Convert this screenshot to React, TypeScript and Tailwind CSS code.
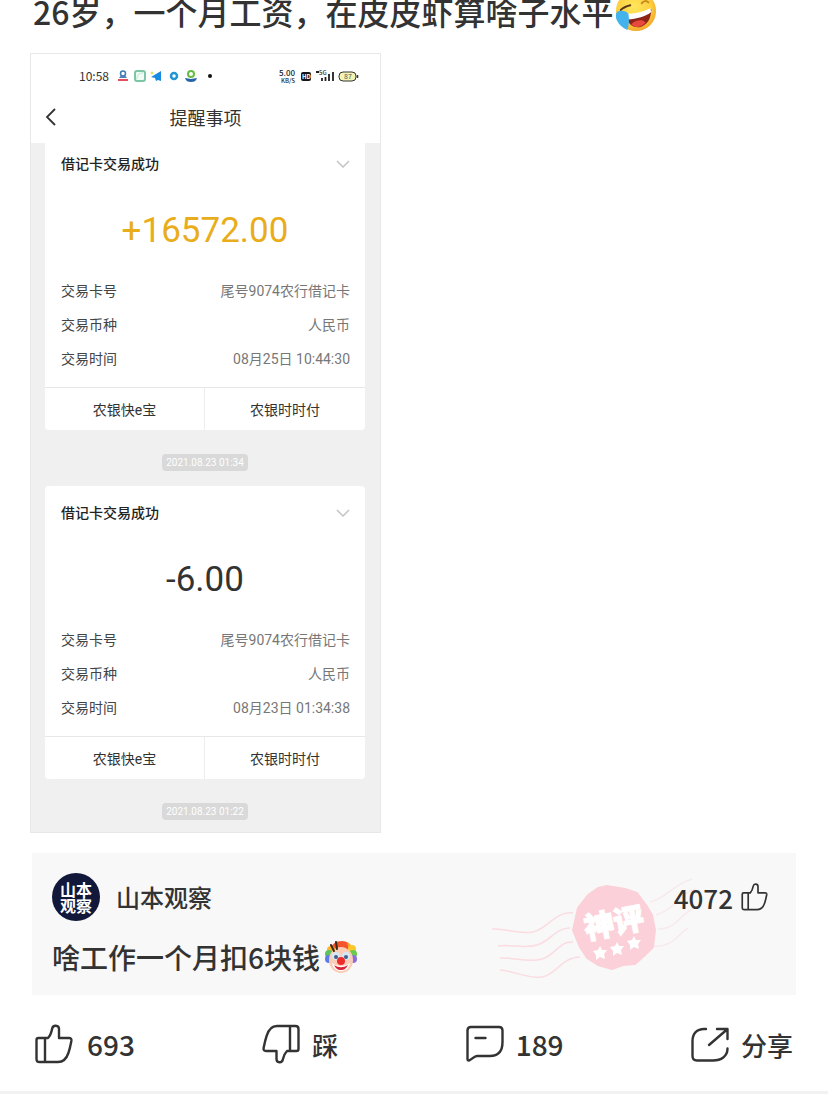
import type { ReactNode } from "react";

type Transaction = {
  amount: string;
  amountClass: string;
  time: string;
};

const transactions: Transaction[] = [
  { amount: "+16572.00", amountClass: "text-[#e9ad1c]", time: "08月25日 10:44:30" },
  { amount: "-6.00", amountClass: "text-[#333333]", time: "08月23日 01:34:38" },
];

const LaughEmoji = () => (
  <svg viewBox="0 0 44 44" className="ml-0.5 h-[42px] w-[42px] shrink-0" role="img" aria-label="笑哭">
    <defs>
      <radialGradient id="face" cx="0.45" cy="0.4" r="0.6">
        <stop offset="0" stopColor="#ffe65c" />
        <stop offset="0.7" stopColor="#fdd040" />
        <stop offset="1" stopColor="#f2a92c" />
      </radialGradient>
    </defs>
    <circle cx="22" cy="22" r="21" fill="url(#face)" />
    <path d="M6 21c3-3 6-4 10-5" stroke="#5b3a1c" strokeWidth="2" fill="none" strokeLinecap="round" />
    <path d="M28 14c2-3 5-3 7-1" stroke="#c98a1f" strokeWidth="2" fill="none" strokeLinecap="round" />
    <path d="M12 27c9 0 17-3 26-7 0 10-4 17-12 19-8 1-13-4-14-12z" fill="#8d2418" />
    <path d="M11 25c10 0 18-2 26-6l1 4c-6 5-15 7-25 8z" fill="#fff" />
    <path d="M17 36c4-4 11-6 15-2-4 5-11 7-15 2z" fill="#e9493c" />
    <path d="M4 22c4-1 8 0 10 3 1 6 1 11-1 17C6 39 0 32 1 26c0-2 1-3 3-4z" fill="#42b3ec" />
  </svg>
);

const ClownEmoji = () => (
  <svg viewBox="0 0 34 34" className="ml-1 h-[34px] w-[34px] shrink-0" role="img" aria-label="小丑">
    <path d="M5 12C7 4 12 1 18 1s10 4 11 11H5z" fill="#f4552d" />
    <path d="M23 2c4 2 6 5 7 10l-5-2z" fill="#f9a72b" />
    <circle cx="7" cy="10" r="4" fill="#f9b52c" />
    <circle cx="28" cy="9" r="4" fill="#f9c92c" />
    <circle cx="5" cy="14" r="4" fill="#5cc25d" />
    <circle cx="29" cy="14" r="4" fill="#6bc94b" />
    <circle cx="5" cy="19" r="4" fill="#5b7be8" />
    <circle cx="29" cy="19" r="4" fill="#8a6be0" />
    <ellipse cx="17" cy="20" rx="12" ry="13" fill="#fbcdb6" />
    <ellipse cx="12" cy="16" rx="4" ry="4" fill="#d5e7f5" />
    <ellipse cx="22" cy="16" rx="4" ry="4" fill="#d5e7f5" />
    <circle cx="12" cy="17" r="2" fill="#3f5f8c" />
    <circle cx="22" cy="17" r="2" fill="#3f5f8c" />
    <path d="M8 23c5 4 13 4 18 0-1 6-5 8-9 8s-8-2-9-8z" fill="#fff" />
    <path d="M10 25c5 3 9 3 14 0-2 4-4 5-7 5s-5-1-7-5z" fill="#d9253a" />
    <circle cx="17" cy="21" r="4" fill="#ee2c2c" />
    <path d="M7 5l3 6M12 2l1 7" stroke="#3b2a12" strokeWidth="2" strokeLinecap="round" />
  </svg>
);

const ThumbUp = ({ className }: { className: string }) => (
  <svg viewBox="0 0 38 40" className={className} fill="none" stroke="currentColor" strokeWidth="2.400" strokeLinejoin="round" strokeLinecap="round" aria-hidden="true">
    <path d="M3.500 14H13c2.500-2.500 3.500-6 4.200-9.500.8-4 6.800-3.600 6.800.5v9h10c1.800 0 2.700 1 2.400 2.800-.8 4-1.400 7.500-3 12.200-2.200 6.500-6 9-10.400 9H4.500c-2 0-3-1-3-3V16c0-1.300.7-2 2-2zM10 14v24" />
  </svg>
);

const ThumbDown = () => (
  <svg viewBox="0 0 38 40" className="h-10 w-[38px]" fill="none" stroke="currentColor" strokeWidth="2.400" strokeLinejoin="round" strokeLinecap="round" aria-hidden="true">
    <path d="M34.500 27H25c-2.500 2.500-3.500 5-4.200 8.500-.8 4-6.300 3.600-6.300-.5v-8H4c-1.800 0-2.700-1-2.400-2.800.8-4 1.400-7.500 3-12.200C6.800 4.500 10.600 2 15 2h18.500c2 0 3 1 3 3v20c0 1.300-.7 2-2 2zM28 27V2" />
  </svg>
);

const CommentIcon = () => (
  <svg viewBox="0 0 38 38" className="h-[38px] w-[38px]" fill="none" stroke="currentColor" strokeWidth="2.400" strokeLinejoin="round" strokeLinecap="round" aria-hidden="true">
    <path d="M5 2h28c2.500 0 3.500 1.500 3.500 3.500V17c0 9-4.500 14-12.500 14H11c-3 0-5.500 4-8 4.500-1 .2-1.500-.4-1.500-1.500V5.500C1.500 3.500 2.500 2 5 2zM9.500 13h10" />
  </svg>
);

const ShareIcon = () => (
  <svg viewBox="0 0 38 38" className="h-[38px] w-[38px]" fill="none" stroke="currentColor" strokeWidth="2.400" strokeLinejoin="round" strokeLinecap="round" aria-hidden="true">
    <path d="M15 4h-2C6 4 1.500 8.500 1.500 16v15c0 3 1.500 4.500 4.500 4.500h16c8 0 14.500-4 14.500-12M26 4h10.500v10M36 4.500L18 20" />
  </svg>
);

const StatusBar = () => (
  <div className="flex h-11 items-center justify-between pr-[21px] pl-12 text-xs text-[#333]">
    <div className="flex items-center gap-2">
      <span className="w-[31px]">10:58</span>
      <svg viewBox="0 0 100 12" className="h-3 w-[100px]" aria-hidden="true">
        <circle cx="5" cy="3.500" r="2.500" fill="none" stroke="#3d7fb5" strokeWidth="1.500" />
        <path d="M1 8c2-4 6-4 8 0z" fill="#4d83b8" />
        <path d="M0 9h10v2H0z" fill="#e34f5d" />
        <rect x="17" y="1" width="10" height="10" rx="2" fill="#f1fbf6" stroke="#7cc6a6" strokeWidth="2" />
        <path d="M19 9c0-4 2-6 6-6" stroke="#b9e8d2" fill="none" />
        <path d="M33 7l10-6v10l-3-1-2 1-1-3z" fill="#168be0" />
        <circle cx="34" cy="3" r="1.500" fill="#d5e96a" />
        <circle cx="56" cy="6" r="3" fill="none" stroke="#2196d2" strokeWidth="2.500" />
        <circle cx="73" cy="4" r="3" fill="#fff" stroke="#67bd43" strokeWidth="2" />
        <path d="M67 8l6 1 6-1c-1 3-3 4-6 4s-5-1-6-4z" fill="#2862a8" />
        <circle cx="92" cy="6" r="2" fill="#111" />
      </svg>
    </div>
    <svg viewBox="0 0 80 16" className="h-4 w-20" aria-hidden="true">
      <text x="0" y="8" fontSize="8" fontWeight="500" fill="#222">5.00</text>
      <text x="2" y="15" fontSize="6" fontWeight="500" fill="#222">KB/S</text>
      <rect x="22" y="4" width="10" height="9" rx="2" fill="#151515" />
      <text x="23" y="11" fontSize="6" fontWeight="700" fill="#fff">HD</text>
      <text x="40" y="7" fontSize="6" fontWeight="500" fill="#222">5G</text>
      <path d="M37 4h3M43 10v3M46.500 9v4M50 6v7M54 4v9" stroke="#222" strokeWidth="1.800" />
      <rect x="60" y="4" width="17" height="9" rx="4" fill="#f3f5b4" stroke="#333" />
      <path d="M78.500 7v3" stroke="#333" strokeWidth="1.500" />
      <text x="65" y="11" fontSize="7" fill="#555">87</text>
    </svg>
  </div>
);

const DetailRow = ({ label, value }: { label: string; value: string }) => (
  <div className="flex h-[34px] items-center justify-between">
    <dt className="text-[#444]">{label}</dt>
    <dd className="text-[#777]">{value}</dd>
  </div>
);

const TransactionCard = ({ item }: { item: Transaction }) => (
  <article className="rounded-sm bg-white">
    <div className="flex h-[54px] items-center justify-between pr-[15px] pl-4">
      <h3 className="text-sm font-medium text-[#222]">借记卡交易成功</h3>
      <svg viewBox="0 0 14 8" className="h-2 w-3.5" fill="none" stroke="#c4c4c4" strokeWidth="1.500" aria-hidden="true">
        <path d="M1 1l6 6 6-6" />
      </svg>
    </div>
    <p className={`h-[83px] text-center text-[35px] leading-[80px] ${item.amountClass}`}>{item.amount}</p>
    <dl className="pr-[15px] pb-[11px] pl-4 text-sm">
      <DetailRow label="交易卡号" value="尾号9074农行借记卡" />
      <DetailRow label="交易币种" value="人民币" />
      <DetailRow label="交易时间" value={item.time} />
    </dl>
    <div className="grid h-[43px] grid-cols-2 divide-x divide-[#ededed] border-t border-[#e8e8e8] text-sm text-[#333]">
      <button type="button" className="pt-0.5">农银快e宝</button>
      <button type="button" className="pt-0.5">农银时时付</button>
    </div>
  </article>
);

const TimeStamp = ({ children }: { children: ReactNode }) => (
  <time className="mx-auto flex h-[17px] w-[86px] items-center justify-center rounded-sm bg-[#d9d9d9] text-[10px] text-white">
    {children}
  </time>
);

const Stamp = () => (
  <svg viewBox="0 0 230 120" className="pointer-events-none absolute top-3.5 right-20 h-[120px] w-[230px]" aria-hidden="true">
    <g fill="none" stroke="#fadce1" strokeWidth="1.500">
      <path d="M6 62c14-1 26 6 41 3s22-21 40-19" />
      <path d="M12 79c13-2 25 3 39-1s18-17 33-17" />
      <path d="M14 91c14-1 28 5 42 1s17-18 31-17" />
      <path d="M14 103c14 1 28 9 42 7s20-20 38-20" />
    </g>
    <g fill="none" stroke="#f8eaec" strokeWidth="1.500">
      <path d="M164 35c18-4 20-16 42-23" />
      <path d="M170 48c20-6 23-22 40-26" />
      <path d="M172 62c18 1 22-15 36-21" />
      <path d="M168 79c18 2 24-12 34-18" />
    </g>
    <path d="M87 63l5-22 10-13 10-7 9-2 18 3 12 4 9 12 6 10 3 15-2 17-9 9-9 8-12 1-11 4-14-4-11-7-7-11z" fill="#fcd0d9" stroke="#fcd0d9" strokeWidth="2" strokeLinejoin="round" />
    <g fill="#fff">
      <text x="98" y="67" fontSize="30" fontWeight="900" stroke="#fff" strokeWidth="1.200" transform="rotate(-11 128 56)">神评</text>
      <path d="M114 79l2 4 5 0-3 4 1 5-5-2-4 3 0-5-3-4 5-1z" />
      <path d="M131 75l2 4 5 0-3 4 1 5-5-2-4 3 0-5-3-4 5-1z" />
      <path d="M148 69l2 4 5 0-3 4 1 5-5-2-4 3 0-5-3-4 5-1z" />
    </g>
  </svg>
);

const App = () => {
  return (
    <main className="overflow-hidden bg-white font-['Noto_Sans_CJK_SC',sans-serif] text-[#333]">
      {/* Post title */}
      <h1 className="-mt-3.5 flex h-[50px] items-center px-[33px] text-[32px] leading-[50px] font-medium whitespace-nowrap">
        26岁，一个月工资，在皮皮虾算啥子水平
        <LaughEmoji />
      </h1>

      {/* Attached phone capture */}
      <section className="mt-[17px] ml-[30px] w-[351px] border border-[#e8e8e8] bg-[#f0f0f0] pb-3 font-[Roboto,'Noto_Sans_CJK_SC',sans-serif]">
        <header className="relative bg-white font-['Noto_Sans_CJK_SC',sans-serif]">
          <StatusBar />
          <div className="grid h-[45px] grid-cols-[40px_1fr_40px] items-center pb-2">
            <button type="button" aria-label="返回" className="flex justify-center">
              <svg viewBox="0 0 12 18" className="h-[18px] w-3" fill="none" stroke="#333" strokeWidth="1.800" aria-hidden="true">
                <path d="M10 1L2 9l8 8" />
              </svg>
            </button>
            <h2 className="text-center text-lg">提醒事项</h2>
          </div>
        </header>
        {/* the first card is scrolled slightly under the header */}
        <div className="-mt-1.5 pr-[15px] pl-3.5">
          <TransactionCard item={transactions[0]} />
          <div className="pt-6 pb-[15px]">
            <TimeStamp>2021.08.23 01:34</TimeStamp>
          </div>
          <TransactionCard item={transactions[1]} />
          <div className="pt-6">
            <TimeStamp>2021.08.23 01:22</TimeStamp>
          </div>
        </div>
      </section>

      {/* Top comment */}
      <section className="relative mx-8 mt-5 h-[142px] bg-[#f8f8f8] px-5 pt-5">
        <Stamp />
        <div className="relative flex items-center">
          <div className="flex h-12 w-12 items-center justify-center rounded-full bg-[#11183a] text-center text-base leading-4 font-bold text-white">
            山本
            <br />
            观察
          </div>
          <span className="ml-4 text-2xl font-medium">山本观察</span>
          <button type="button" className="mr-2 ml-auto flex items-center gap-2 text-[26px] font-medium">
            4072
            <ThumbUp className="h-7 w-[27px]" />
          </button>
        </div>
        <p className="relative mt-3 flex h-12 items-center text-[28px] font-medium">
          啥工作一个月扣6块钱
          <ClownEmoji />
        </p>
      </section>

      {/* Actions */}
      <div className="flex h-[99px] items-center justify-between border-b-3 border-[#f2f2f2] pt-0.5 pr-[35px] pl-[35px] text-[26px] font-medium">
        <button type="button" className="flex items-center gap-3.5 text-[28px]">
          <ThumbUp className="h-10 w-[38px]" />
          693
        </button>
        <button type="button" className="flex items-center gap-3">
          <ThumbDown />
          踩
        </button>
        <button type="button" className="flex items-center gap-3 text-[28px]">
          <CommentIcon />
          189
        </button>
        <button type="button" className="flex items-center gap-3">
          <ShareIcon />
          分享
        </button>
      </div>
    </main>
  );
};

export default App;
